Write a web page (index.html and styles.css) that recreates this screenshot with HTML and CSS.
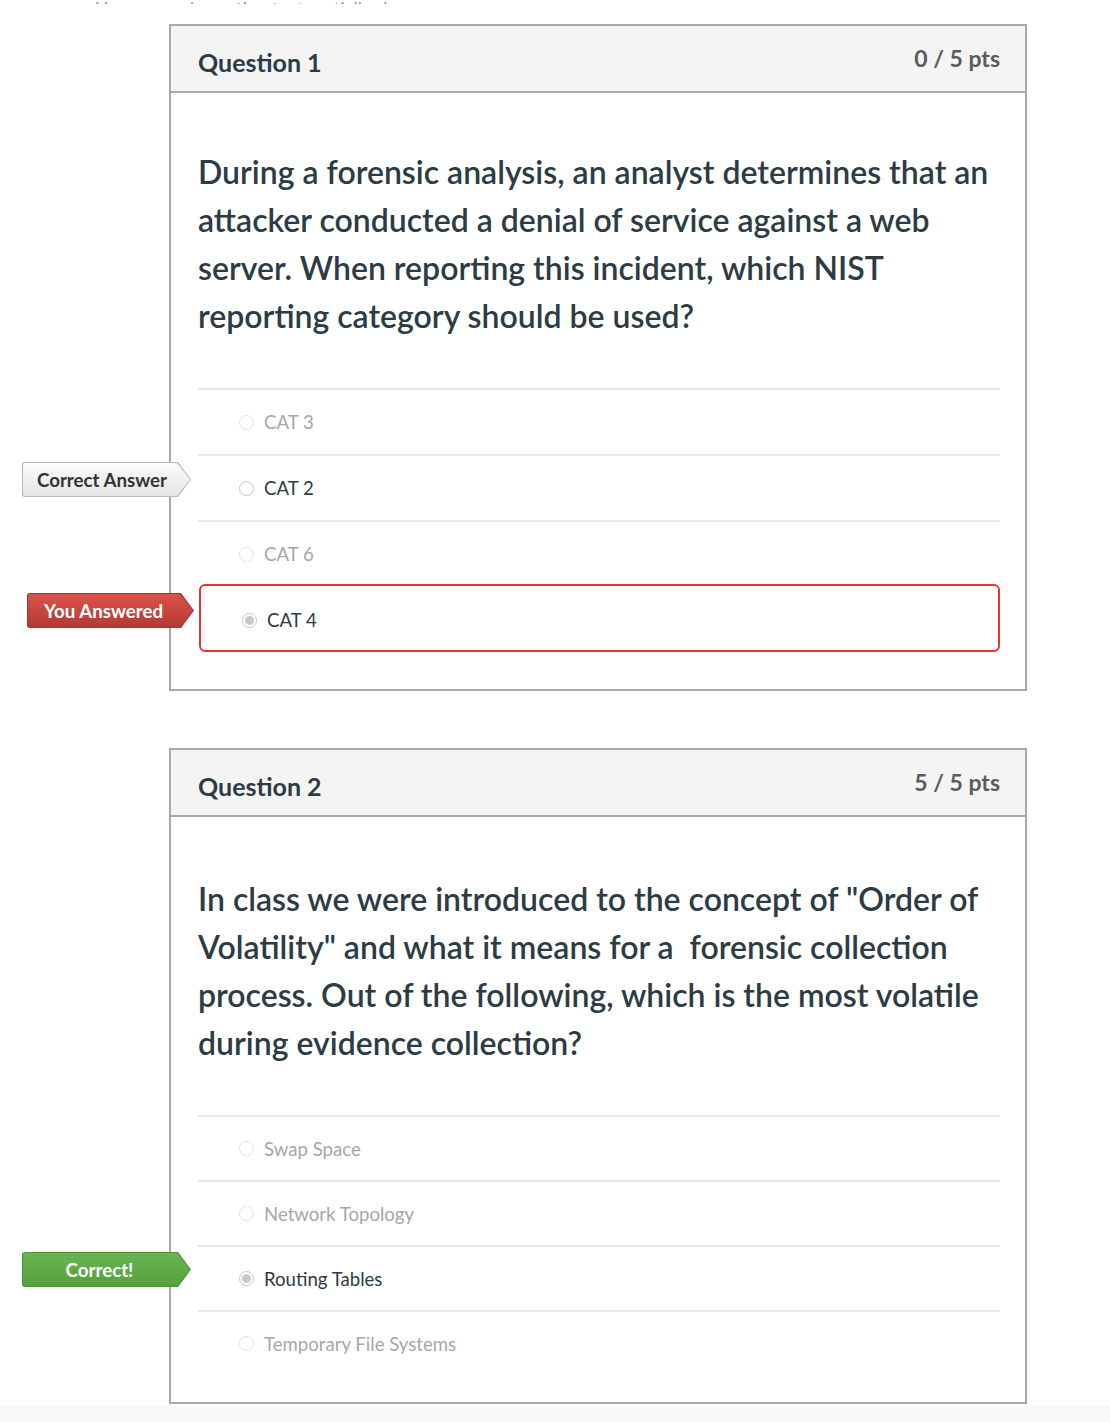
FILE: index.html
```html
<!DOCTYPE html>
<html lang="en">
<head>
<meta charset="utf-8">
<title>Quiz Results</title>
<link rel="stylesheet" href="styles.css">
</head>
<body>
<div class="cut"><span>Unanswered question text partially shown</span></div>
<main class="quiz">
  <section class="card">
    <header class="card-head">
      <h2 class="card-title">Question 1</h2>
      <div class="card-pts">0 / 5 pts</div>
    </header>
    <div class="card-body body-1">
      <p class="q-text">During a forensic analysis, an analyst determines that an attacker conducted a denial of service against a web server. When reporting this incident, which NIST reporting category should be used?</p>
      <ul class="answers">
        <li class="answer faded"><span class="radio"></span><span class="a-text">CAT 3</span></li>
        <li class="answer correct-ans"><span class="tag tag-gray"><span class="tag-text">Correct Answer</span></span><span class="radio"></span><span class="a-text">CAT 2</span></li>
        <li class="answer faded"><span class="radio"></span><span class="a-text">CAT 6</span></li>
        <li class="answer wrong"><span class="tag tag-red"><span class="tag-text">You Answered</span></span><span class="radio checked"></span><span class="a-text">CAT 4</span></li>
      </ul>
    </div>
  </section>

  <section class="card">
    <header class="card-head">
      <h2 class="card-title">Question 2</h2>
      <div class="card-pts">5 / 5 pts</div>
    </header>
    <div class="card-body body-2">
      <p class="q-text">In class we were introduced to the concept of "Order of Volatility" and what it means for a&nbsp; forensic collection process. Out of the following, which is the most volatile during evidence collection?</p>
      <ul class="answers">
        <li class="answer faded"><span class="radio"></span><span class="a-text">Swap Space</span></li>
        <li class="answer faded"><span class="radio"></span><span class="a-text">Network Topology</span></li>
        <li class="answer correct-ans"><span class="tag tag-green"><span class="tag-text">Correct!</span></span><span class="radio checked"></span><span class="a-text">Routing Tables</span></li>
        <li class="answer faded"><span class="radio"></span><span class="a-text">Temporary File Systems</span></li>
      </ul>
    </div>
  </section>
</main>
<div class="page-end"></div>
</body>
</html>
```
FILE: styles.css
```css
* { box-sizing: border-box; }
html, body { margin: 0; padding: 0; }
body {
  background: #ffffff;
  font-family: Lato, "Open Sans", "Liberation Sans", sans-serif;
  color: #2d3b45;
}
.cut {
  height: 4px;
  overflow: hidden;
  display: flex;
  align-items: flex-end;
  padding-left: 95px;
  font-size: 18px;
  line-height: 18px;
  color: #9a9a9a;
}
.cut span { display: block; transform: translateY(13px); }

.quiz {
  padding: 20px 0 0 169px;
  display: flex;
  flex-direction: column;
  gap: 57px;
}
.card {
  width: 858px;
  border: 2px solid #a9a9a9;
  background: #fff;
}
.card-head {
  height: 67px;
  background: #f4f4f4;
  border-bottom: 2px solid #a9a9a9;
  display: flex;
  justify-content: space-between;
  align-items: flex-start;
  padding: 0 25px 0 27px;
}
.card-title {
  margin: 21px 0 0;
  font-size: 25px;
  line-height: 30px;
  font-weight: 700;
  color: #2d3b45;
}
.card-pts {
  margin-top: 18px;
  font-size: 23px;
  line-height: 28px;
  font-weight: 700;
  color: #5b5b5b;
}
.card-body {
  padding: 55px 25px 37px 27px;
}
.body-2 { padding-top: 58px; padding-bottom: 27px; }
.q-text {
  margin: 0 0 48px;
  font-size: 32px;
  line-height: 48px;
  font-weight: 600;
  color: #2d3b45;
}
.answers {
  list-style: none;
  margin: 0;
  padding: 0;
}
.answer {
  position: relative;
  height: 66px;
  border-top: 2px solid #e8e8e8;
  display: flex;
  align-items: center;
  padding-left: 41px;
  font-size: 18.6px;
  color: #2d3b45;
}
.body-2 .answer { height: 65px; }
.answer.faded { color: #a7a7a7; }
.answer.wrong {
  height: 68px;
  margin-top: -2px;
  border: 2px solid #e8352a;
  border-radius: 6px;
  margin-left: 1px;
  padding: 4px 0 0 41px;
}
.radio {
  width: 15px;
  height: 15px;
  border-radius: 50%;
  border: 1px solid #c4c4c4;
  background: #fff;
  margin-right: 10px;
  flex: none;
  display: flex;
  align-items: center;
  justify-content: center;
}
.faded .radio { border-color: #e2e2e2; }
.radio.checked { border-color: #c8c8c8; }
.radio.checked::after {
  content: "";
  width: 9px;
  height: 9px;
  border-radius: 50%;
  background: #c9c9c9;
}

.tag {
  position: absolute;
  top: 6px;
  left: -176px;
  width: 169px;
  height: 35px;
  border-radius: 3px;
  clip-path: polygon(0 0, calc(100% - 13px) 0, 100% 50%, calc(100% - 13px) 100%, 0 100%);
  display: flex;
  align-items: center;
  font-size: 18.7px;
  font-weight: 700;
}
.tag::before {
  content: "";
  position: absolute;
  inset: 1px;
  border-radius: 2px;
  clip-path: polygon(0 0, calc(100% - 13px) 0, 100% 50%, calc(100% - 13px) 100%, 0 100%);
}
.tag-text { position: relative; }
.tag-gray { background: #b9b9b9; color: #333; padding-left: 15px; }
.tag-gray::before { background: linear-gradient(#fbfbfb, #e6e6e6); }
.tag-red { background: #a8322b; color: #fff; padding-left: 17px; left: -174px; top: 7px; width: 167px; }
.tag-red::before { background: linear-gradient(#d9534c, #b43a31); }
.tag-green { background: #4f8f3a; color: #fff; justify-content: center; padding-right: 14px; top: 5px; }
.tag-green::before { background: linear-gradient(#6ab553, #53a03c); }

.page-end {
  margin-top: 1px;
  height: 24px;
  background: #f9f9f9;
}
```
